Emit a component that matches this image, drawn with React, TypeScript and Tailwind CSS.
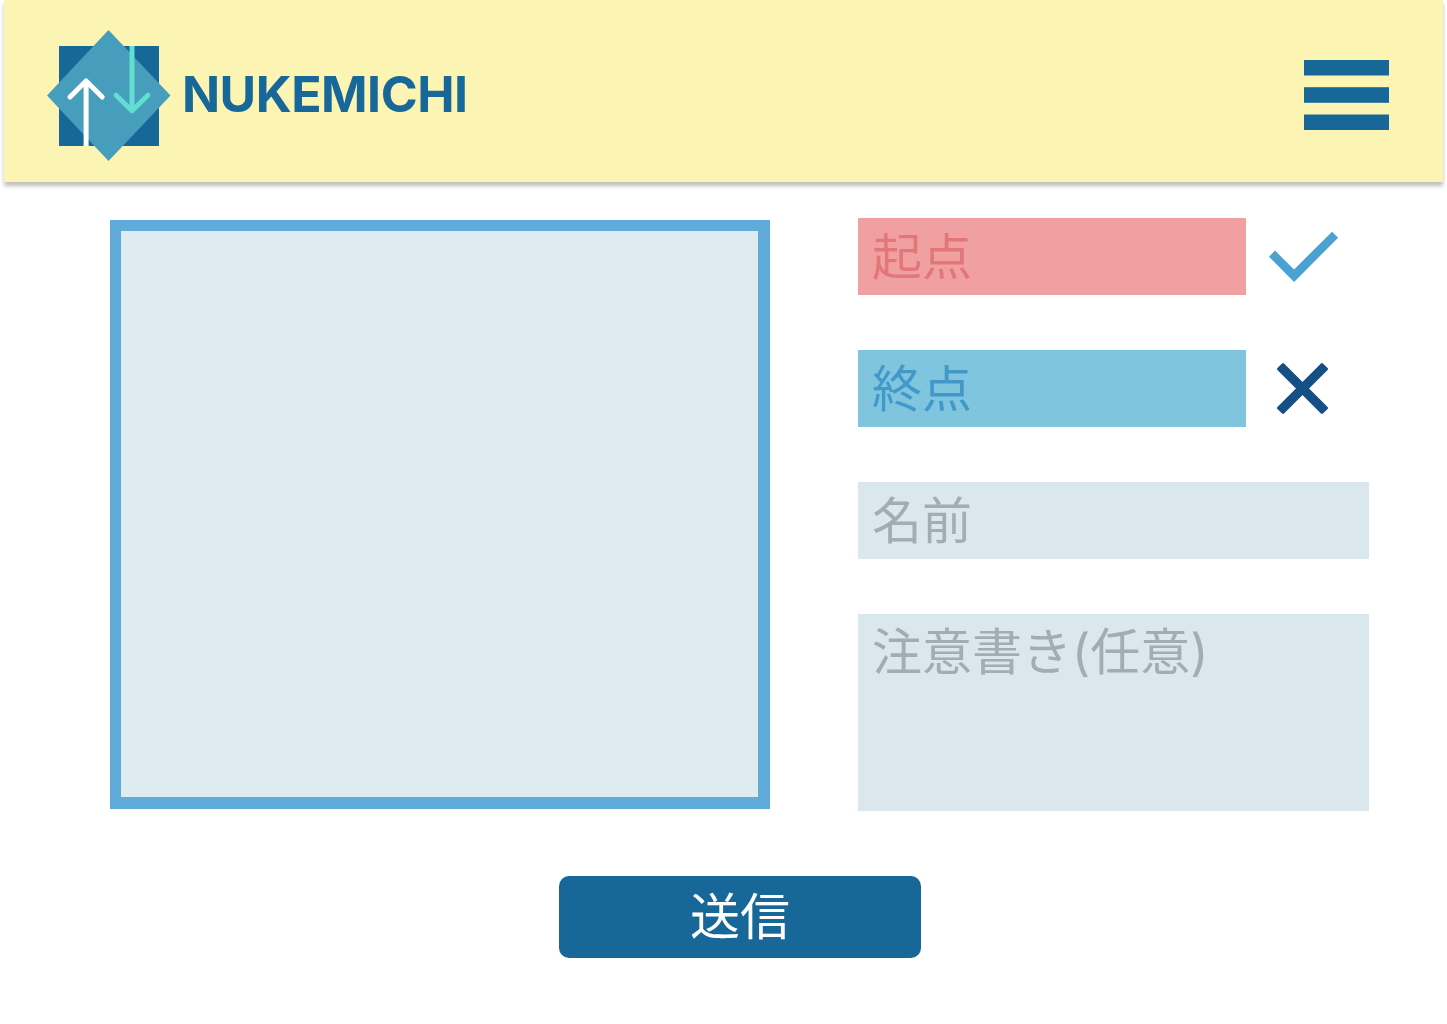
import React from "react";

const jp = "font-['Inter','Noto_Sans_CJK_JP',sans-serif] text-[50px] font-normal";

function Logo() {
  return (
    <svg width="124" height="132" viewBox="47 30 124 132" fill="none">
      <rect x="59" y="46" width="100" height="100" fill="#176898" />
      <path d="M108.5 30L170.5 95.5L108.5 161L47 95.5Z" fill="#479EBC" />
      <g strokeWidth="5" strokeLinejoin="round">
        <path d="M86.1 146V81" stroke="#fff" />
        <path d="M70 97L86.1 81L102.2 97" stroke="#fff" strokeLinecap="round" />
        <path d="M132 46V110.5" stroke="#60DFD0" />
        <path d="M116 95.2L132 110.8L148 95.2" stroke="#60DFD0" strokeLinecap="round" />
      </g>
    </svg>
  );
}

function MenuIcon() {
  return (
    <svg width="85" height="70" viewBox="0 0 85 70" fill="#176898">
      <rect width="85" height="15.5" />
      <rect y="27.2" width="85" height="15.6" />
      <rect y="54.5" width="85" height="15.5" />
    </svg>
  );
}

function CheckIcon() {
  return (
    <svg className="ml-[23px] mt-[13px]" width="70" height="52" viewBox="1269 231 70 52" fill="#4BA1D2">
      <path d="M1269 256.8L1275 250.6L1294.1 269.4L1332.1 231.7L1338.1 237.7L1294.1 282Z" />
    </svg>
  );
}

function CrossIcon() {
  return (
    <svg className="ml-[30px] mt-3" width="53" height="53" viewBox="-26.5 -26.5 53 53" fill="#144F86">
      <rect x="-32.2" y="-4.7" width="64.4" height="9.4" rx="1.4" transform="rotate(45)" />
      <rect x="-32.2" y="-4.7" width="64.4" height="9.4" rx="1.4" transform="rotate(-45)" />
    </svg>
  );
}

export default function App() {
  return (
    <div className="h-[1024px] w-[1447px] overflow-hidden bg-white">
      <header className="mx-auto flex h-[182px] w-[1439px] items-start bg-[#fcf4b3] pl-[43px] pr-[54px] shadow-[0_4px_4px_rgba(0,0,0,0.25)]">
        <div className="mt-[30px]"><Logo /></div>
        <div className="ml-[11px] mt-[64px] font-['Inter',sans-serif] text-[50px] font-bold leading-[61px] tracking-[-0.5px] text-[#176898]">NUKEMICHI</div>
        <button className="ml-auto mt-[60px]" aria-label="Menu"><MenuIcon /></button>
      </header>
      <main className="flex items-start pl-[110px] pt-9">
        <div className="mt-[2px] h-[589px] w-[660px] border-[12px] border-l-[11px] border-t-[11px] border-[#5fabd9] bg-[#deebf0]" />
        <form className="ml-[88px] flex w-[511px] flex-col gap-[55px]">
          <div className="flex h-[77px]">
            <div className={`${jp} w-[388px] bg-[#f1a0a2] pl-[14px] leading-[79px] text-[#e27779]`}>起点</div>
            <CheckIcon />
          </div>
          <div className="flex h-[77px]">
            <div className={`${jp} w-[388px] bg-[#7fc5de] pl-[14px] leading-[79px] text-[#4198c9]`}>終点</div>
            <CrossIcon />
          </div>
          <div className={`${jp} h-[77px] bg-[#dae7ec] pl-[14px] leading-[79px] text-[#a0adb3]`}>名前</div>
          <div className={`${jp} h-[197px] bg-[#dae7ec] pl-[14px] leading-[77px] text-[#a0adb3]`}>注意書き(任意)</div>
        </form>
      </main>
      <button className={`${jp} ml-[559px] mt-[65px] block h-[82px] w-[362px] rounded-[10px] bg-[#176898] leading-[77px] text-white`}>送信</button>
    </div>
  );
}
